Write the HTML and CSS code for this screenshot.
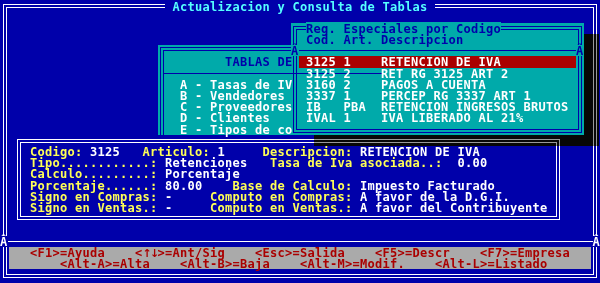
FILE: index.html
```html
<!DOCTYPE html>
<html>
<head>
<meta charset="utf-8">
<link rel="stylesheet" href="styles.css">
</head>
<body>
<div class="screen">
  <div class="main">
    <div class="frame main-frame"></div>
    <div class="row main-title"><span> Actualizacion y Consulta de Tablas </span></div>
    <div class="main-body"></div>
    <div class="row sep"><span class="tee">Â</span><span class="hline"></span><span class="tee">Â</span></div>
    <div class="footer">
      <div class="row f1">&lt;F1&gt;=Ayuda    &lt;<span class="arr">↑</span><span class="arr">↓</span>&gt;=Ant/Sig    &lt;Esc&gt;=Salida    &lt;F5&gt;=Descr    &lt;F7&gt;=Empresa</div>
      <div class="row f2">&lt;Alt-A&gt;=Alta    &lt;Alt-B&gt;=Baja    &lt;Alt-M&gt;=Modif.    &lt;Alt-L&gt;=Listado</div>
    </div>
  </div>

  <div class="win tablas">
    <div class="frame tablas-frame"></div>
    <div class="row"></div>
    <div class="row tablas-title">TABLAS DE</div>
    <div class="row tablas-sep"><span class="hline"></span></div>
    <div class="row item">A - Tasas de IV</div>
    <div class="row item">B - Vendedores</div>
    <div class="row item">C - Proveedores</div>
    <div class="row item">D - Clientes</div>
    <div class="row item">E - Tipos de co</div>
  </div>

  <div class="win details">
    <div class="frame details-frame"></div>
    <div class="row"></div>
    <div class="row d"><span class="y">Codigo: </span><span class="w">3125</span><span class="y">   Articulo: </span><span class="w">1</span><span class="y">     Descripcion: </span><span class="w">RETENCION DE IVA</span></div>
    <div class="row d"><span class="y">Tipo............: </span><span class="w">Retenciones</span><span class="y">   Tasa de Iva asociada..:  </span><span class="w">0.00</span></div>
    <div class="row d"><span class="y">Calculo.........: </span><span class="w">Porcentaje</span></div>
    <div class="row d"><span class="y">Porcentaje......: </span><span class="w">80.00</span><span class="y">    Base de Calculo: </span><span class="w">Impuesto Facturado</span></div>
    <div class="row d"><span class="y">Signo en Compras: </span><span class="w">-</span><span class="y">     Computo en Compras: </span><span class="w">A favor de la D.G.I.</span></div>
    <div class="row d"><span class="y">Signo en Ventas.: </span><span class="w">-</span><span class="y">     Computo en Ventas.: </span><span class="w">A favor del Contribuyente</span></div>
  </div>

  <div class="win popup">
    <div class="frame popup-frame"></div>
    <div class="row popup-title"><span>Reg. Especiales por Codigo</span></div>
    <div class="row popup-head">Cod. Art. Descripcion</div>
    <div class="row popup-sep"><span class="tee">Â</span><span class="hline"></span><span class="tee">Â</span></div>
    <div class="row li sel">3125 1    RETENCION DE IVA</div>
    <div class="row li">3125 2    RET RG 3125 ART 2</div>
    <div class="row li">3160 2    PAGOS A CUENTA</div>
    <div class="row li">3337 1    PERCEP RG 3337 ART 1</div>
    <div class="row li">IB   PBA  RETENCION INGRESOS BRUTOS</div>
    <div class="row li">IVAL 1    IVA LIBERADO AL 21%</div>
  </div>

  <div class="shadow sh-right"></div>
  <div class="shadow sh-bottom"></div>
</div>
</body>
</html>
```
FILE: styles.css
```css
:root {
  --w: 7.5px;
  --h: 11.2px;
  --blue: #0000aa;
  --teal: #00aaaa;
  --red: #aa0000;
  --gray: #aaaaaa;
  --yellow: #ffff55;
  --cyan: #55ffff;
  --white: #ffffff;
}

* { box-sizing: border-box; margin: 0; padding: 0; }

html, body {
  width: 600px;
  height: 283px;
  overflow: hidden;
  background: #000;
}

body {
  font-family: "DejaVu Sans Mono", monospace;
  font-weight: bold;
  font-size: 12px;
  letter-spacing: 0.275px;
}

.screen {
  position: relative;
  width: 600px;
  height: 283px;
  background: var(--blue);
  overflow: hidden;
}

.row {
  position: relative;
  z-index: 1;
  height: var(--h);
  padding-top: 1px;
  line-height: var(--h);
  white-space: pre;
}

.frame {
  position: absolute;
  z-index: 0;
  border: 4px double var(--white);
}

.hline {
  display: block;
  height: 1px;
  background: var(--white);
}

/* main window */
.main {
  position: absolute;
  inset: 0;
  display: flex;
  flex-direction: column;
  padding-top: 0.5px;
}

.main-frame {
  left: 2.5px;
  top: 3.5px;
  right: 3.5px;
  bottom: 5px;
}

.main-title {
  display: flex;
  justify-content: center;
  color: var(--cyan);
}

.main-title span { background: var(--blue); }

.main-body { height: calc(var(--h) * 20); }

.sep {
  display: flex;
  align-items: center;
  padding-top: 0;
  color: var(--white);
}

.tee {
  width: var(--w);
  height: 100%;
  padding-top: 1px;
}

.sep .tee { background: var(--blue); }

.sep .hline { flex: 1; }

.footer {
  position: relative;
  z-index: 1;
  margin: 0 9.5px 0 9px;
  background: var(--gray);
  color: var(--red);
}

.f1 { padding-left: 21px; }
.f2 { padding-left: 51px; }

.arr {
  display: inline-block;
  width: var(--w);
  letter-spacing: 0;
  text-align: center;
  font-family: "DejaVu Sans", sans-serif;
  font-size: 11px;
}

/* generic window */
.win {
  position: absolute;
  display: flex;
  flex-direction: column;
}

/* tablas window */
.tablas {
  left: 157.5px;
  top: 45.3px;
  width: 225px;
  height: 100.8px;
  background: var(--teal);
  color: var(--white);
}

.tablas-frame {
  left: 2.5px;
  top: 2px;
  right: 2.5px;
  bottom: 2px;
  border-color: var(--blue);
}

.tablas-title {
  padding-left: 67.5px;
  color: var(--blue);
}

.tablas-sep {
  display: flex;
  align-items: center;
  padding-top: 0;
  padding-left: 5.5px;
}

.tablas-sep .hline {
  flex: 1;
  background: var(--blue);
}

.item { padding-left: 22.5px; }

/* details window */
.details {
  left: 15px;
  top: 134.9px;
  width: 547.5px;
  height: 89.6px;
  background: var(--blue);
}

.details-frame {
  left: 2.3px;
  top: 4px;
  right: 2.5px;
  bottom: 4px;
}

.d { padding-left: 15px; }
.y { color: var(--yellow); }
.w { color: var(--white); }

/* popup window */
.popup {
  left: 291px;
  top: 22.9px;
  width: 292.5px;
  height: 112px;
  background: var(--teal);
  color: var(--white);
}

.popup-frame {
  left: 1.8px;
  top: 3.6px;
  right: 2px;
  bottom: 1.5px;
  border-color: var(--blue);
}

.popup-title { padding-left: 15px; color: var(--blue); }
.popup-title span { background: var(--teal); }

.popup-head { padding-left: 15px; color: var(--blue); }

.popup-sep {
  display: flex;
  align-items: center;
  padding-top: 0;
  color: var(--blue);
}

.popup-sep .tee { background: var(--teal); }

.popup-sep .hline {
  flex: 1;
  background: var(--blue);
}

.li {
  margin-left: var(--w);
  width: calc(var(--w) * 37);
  padding-left: var(--w);
}

.sel { background: var(--red); }

/* drop shadow of popup */
.shadow {
  position: absolute;
  z-index: 5;
  backdrop-filter: grayscale(1) brightness(0.6);
}

.sh-right {
  left: 583.5px;
  top: 34.1px;
  width: 15px;
  height: 100.8px;
}

.sh-bottom {
  left: 313.5px;
  top: 134.9px;
  width: 285px;
  height: 11.2px;
}
```
